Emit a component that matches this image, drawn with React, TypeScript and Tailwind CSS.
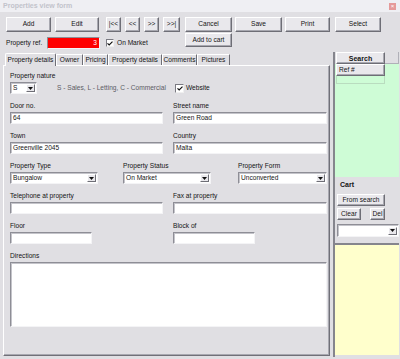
import React from "react";

const F = "font-['Liberation_Sans',Arial,sans-serif]";

function Btn({ className = "", children }: { className?: string; children?: React.ReactNode }) {
  return (
    <div
      className={`flex items-center justify-center bg-[#e9e8ec] border border-t-white border-l-white border-r-[#6e6e76] border-b-[#6e6e76] shadow-[inset_-1px_-1px_0_#a8a8b0] leading-none text-[#141414] box-border shrink-0 ${className}`}
    >
      {children}
    </div>
  );
}

function Input({ className = "", children }: { className?: string; children?: React.ReactNode }) {
  return (
    <div
      className={`bg-white border border-t-[#8e8e96] border-l-[#8e8e96] border-r-[#f4f4f6] border-b-[#f4f4f6] shadow-[inset_1px_1px_0_#c4c4ca] box-border h-[12px] flex items-center pl-[2px] leading-none shrink-0 ${className}`}
    >
      {children}
    </div>
  );
}

function Arrow() {
  return (
    <div className="ml-auto mr-[1px] w-[9px] h-[8px] bg-[#e9e8ec] border border-t-white border-l-white border-r-[#6e6e76] border-b-[#6e6e76] box-border flex items-center justify-center">
      <svg width="5" height="3" viewBox="0 0 5 3">
        <path d="M0 0h5L2.5 3z" fill="#111" />
      </svg>
    </div>
  );
}

function Combo({ className = "", value }: { className?: string; value?: string }) {
  return (
    <Input className={className}>
      <span>{value}</span>
      <Arrow />
    </Input>
  );
}

function Check({ className = "" }: { className?: string }) {
  return (
    <div
      className={`w-[8px] h-[8px] bg-white border border-t-[#7a7a82] border-l-[#7a7a82] border-r-[#f0f0f0] border-b-[#f0f0f0] box-border flex items-center justify-center shrink-0 ${className}`}
    >
      <svg width="6" height="5" viewBox="0 0 6 5">
        <path d="M0.5 2.3L2.2 4L5.5 0.7" stroke="#111" strokeWidth="1.2" fill="none" />
      </svg>
    </div>
  );
}

function Label({ children, className = "" }: { children?: React.ReactNode; className?: string }) {
  return <div className={`h-[8px] leading-[8px] whitespace-nowrap ${className}`}>{children}</div>;
}

export default function App() {
  const tabs = [
    { t: "Owner", w: "w-[27px]" },
    { t: "Pricing", w: "w-[25px]" },
    { t: "Property details", w: "w-[54px]" },
    { t: "Comments", w: "w-[35px]" },
    { t: "Pictures", w: "w-[33px]" },
  ];
  return (
    <div className={`${F} w-[400px] h-[359px] bg-[#e0dfe3] text-[6.6px] text-[#141414] overflow-hidden flex flex-col`}>
      {/* Title bar */}
      <div className="h-[12px] shrink-0 flex items-center justify-between bg-[#efeff3] pl-[3px] pr-[4px]">
        <span className="font-bold text-[7px] text-[#c2c3cb]">Properties view form</span>
        <div className="w-[7px] h-[7px] bg-[#e59a9a] flex items-center justify-center text-white text-[6px] leading-none">×</div>
      </div>

      {/* Toolbar */}
      <div className="h-[40px] shrink-0 flex items-start pl-[6px] pt-[5px]">
        <div className="w-[179px] flex flex-col">
          <div className="flex">
            <Btn className="w-[45px] h-[15px]">Add</Btn>
            <Btn className="w-[44px] h-[15px] ml-[4px]">Edit</Btn>
            <Btn className="w-[15px] h-[15px] ml-[7px] text-[#6e6e76]">|&lt;&lt;</Btn>
            <Btn className="w-[15px] h-[15px] ml-[4px] text-[#6e6e76]">&lt;&lt;</Btn>
            <Btn className="w-[15px] h-[15px] ml-[4px] text-[#6e6e76]">&gt;&gt;</Btn>
            <Btn className="w-[17px] h-[15px] ml-[4px] text-[#6e6e76]">&gt;&gt;|</Btn>
          </div>
          <div className="flex items-center mt-[5px] h-[12px]">
            <span className="w-[41px] whitespace-nowrap">Property ref.</span>
            <div className="w-[53px] h-[12px] bg-[#ff0000] border border-t-[#8e8e96] border-l-[#8e8e96] border-r-[#f4f4f6] border-b-[#f4f4f6] box-border flex items-center justify-end pr-[2px] text-white leading-none">
              3
            </div>
            <Check className="ml-[6px]" />
            <span className="ml-[3px] whitespace-nowrap">On Market</span>
          </div>
        </div>
        <div className="flex flex-col">
          <Btn className="w-[47px] h-[15px]">Cancel</Btn>
          <Btn className="w-[47px] h-[14px] mt-[1px]">Add to cart</Btn>
        </div>
        <Btn className="w-[47px] h-[15px] ml-[3px]">Save</Btn>
        <Btn className="w-[45px] h-[15px] ml-[3px]">Print</Btn>
        <Btn className="w-[46px] h-[15px] ml-[5px]">Select</Btn>
      </div>

      {/* Body */}
      <div className="flex h-[307px] shrink-0">
        <div className="pl-[3px] w-[330px] flex flex-col">
          {/* Tabs */}
          <div className="h-[13px] flex items-end pl-[2px]">
            <div className="w-[51px] h-[13px] border-t border-l border-r border-t-white border-l-white border-r-[#6e6e76] rounded-t-[2px] box-border flex items-center justify-center whitespace-nowrap relative top-[1px] bg-[#e0dfe3]">
              Property details
            </div>
            {tabs.map((tb) => (
              <div
                key={tb.t}
                className={`${tb.w} h-[11px] border-t border-l border-r border-t-white border-l-white border-r-[#6e6e76] box-border flex items-center justify-center whitespace-nowrap`}
              >
                {tb.t}
              </div>
            ))}
          </div>
          {/* Tab page */}
          <div className="w-[327px] h-[291px] border border-t-white border-l-white border-r-[#707078] border-b-[#707078] shadow-[inset_-1px_-1px_0_#a8a8b0] box-border pt-[6px] pl-[6px] flex flex-col">
            <Label>Property nature</Label>
            <div className="flex items-center mt-[2px] h-[12px]">
              <div className="w-[163px] flex items-center">
                <Combo className="w-[27px]" value="S" />
                <span className="ml-[20px] text-[#5c5c64] whitespace-nowrap">S - Sales, L - Letting, C - Commercial</span>
              </div>
              <Check className="ml-[2px] w-[9px] h-[9px]" />
              <span className="ml-[2px]">Website</span>
            </div>

            <div className="flex mt-[8px]">
              <div className="w-[163px] flex flex-col">
                <Label>Door no.</Label>
                <Input className="w-[153px] mt-[2px]">64</Input>
              </div>
              <div className="flex flex-col">
                <Label>Street name</Label>
                <Input className="w-[154px] mt-[2px]">Green Road</Input>
              </div>
            </div>

            <div className="flex mt-[8px]">
              <div className="w-[163px] flex flex-col">
                <Label>Town</Label>
                <Input className="w-[153px] mt-[2px]">Greenville 2045</Input>
              </div>
              <div className="flex flex-col">
                <Label>Country</Label>
                <Input className="w-[154px] mt-[2px]">Malta</Input>
              </div>
            </div>

            <div className="flex mt-[8px]">
              <div className="w-[113px] flex flex-col">
                <Label>Property Type</Label>
                <Combo className="w-[88px] mt-[2px]" value="Bungalow" />
              </div>
              <div className="w-[115px] flex flex-col">
                <Label>Property Status</Label>
                <Combo className="w-[88px] mt-[2px]" value="On Market" />
              </div>
              <div className="flex flex-col">
                <Label>Property Form</Label>
                <Combo className="w-[89px] mt-[2px]" value="Unconverted" />
              </div>
            </div>

            <div className="flex mt-[8px]">
              <div className="w-[163px] flex flex-col">
                <Label>Telephone at property</Label>
                <Input className="w-[153px] mt-[2px]" />
              </div>
              <div className="flex flex-col">
                <Label>Fax at property</Label>
                <Input className="w-[154px] mt-[2px]" />
              </div>
            </div>

            <div className="flex mt-[8px]">
              <div className="w-[163px] flex flex-col">
                <Label>Floor</Label>
                <Input className="w-[82px] mt-[2px]" />
              </div>
              <div className="flex flex-col">
                <Label>Block of</Label>
                <Input className="w-[82px] mt-[2px]" />
              </div>
            </div>

            <div className="flex flex-col mt-[8px]">
              <Label>Directions</Label>
              <div className="w-[317px] h-[65px] mt-[2px] bg-white border border-t-[#8e8e96] border-l-[#8e8e96] border-r-[#f4f4f6] border-b-[#f4f4f6] shadow-[inset_1px_1px_0_#c4c4ca] box-border" />
            </div>
          </div>
        </div>

        {/* Right panel */}
        <div className="w-[66px] ml-[3px] h-[305px] flex flex-col border-l-2 border-l-[#85858d] box-border">
          <div className="h-[12px] flex pl-[1px] shrink-0">
            <Btn className="w-[49px] h-[12px] font-bold text-[7px]">Search</Btn>
            <div className="w-[14px] h-[12px] border-r border-b border-r-[#b0b0b8] border-b-[#b0b0b8] box-border" />
          </div>
          <div className="h-[113px] bg-[#cefcd6] shrink-0 flex flex-col">
            <Btn className="w-[49px] h-[12px] ml-[1px] justify-start pl-[2px]">Ref #</Btn>
            <div className="w-[49px] h-[8px] ml-[1px] border-r border-b border-l border-[#b9dcbf] box-border" />
          </div>
          <div className="h-[66px] shrink-0 flex flex-col pl-[2px] pt-[4px]">
            <Label className="font-bold pl-[3px] text-[7px]">Cart</Label>
            <Btn className="w-[48px] h-[12px] mt-[5px]">From search</Btn>
            <div className="flex mt-[2px]">
              <Btn className="w-[24px] h-[12px]">Clear</Btn>
              <Btn className="w-[15px] h-[12px] ml-[9px]">Del</Btn>
            </div>
            <Combo className="w-[62px] h-[13px] mt-[4px]" />
          </div>
          <div className="h-[112px] shrink-0 bg-[#ffffcc] border-t-2 border-t-[#85858d] box-border" />
        </div>
      </div>
    </div>
  );
}
